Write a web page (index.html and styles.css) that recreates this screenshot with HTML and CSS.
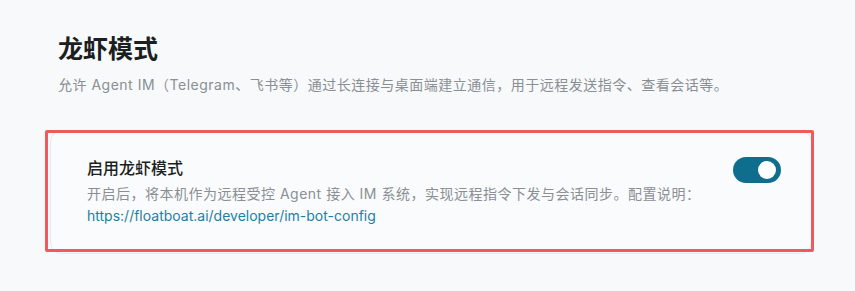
FILE: index.html
```html
<!DOCTYPE html>
<html lang="zh-CN">
<head>
    <meta charset="UTF-8">
    <meta name="viewport" content="width=device-width, initial-scale=1.0">
    <title>龙虾模式</title>
    <link rel="stylesheet" href="styles.css">
</head>
<body>

    <section class="settings">
        <h1 class="settings-title">龙虾模式</h1>
        <p class="settings-desc">允许 Agent IM（Telegram、飞书等）通过长连接与桌面端建立通信，用于远程发送指令、查看会话等。</p>

        <div class="card-wrap">
            <div class="card">
                <div class="card-text">
                    <div class="card-title">启用龙虾模式</div>
                    <div class="card-desc">
                        开启后，将本机作为远程受控 Agent 接入 IM 系统，实现远程指令下发与会话同步。配置说明：<br>
                        <a href="#">https://floatboat.ai/developer/im-bot-config</a>
                    </div>
                </div>
                <label class="switch">
                    <input type="checkbox" checked>
                    <span class="slider"></span>
                </label>
            </div>
            <div class="highlight"></div>
        </div>
    </section>

</body>
</html>
```

FILE: styles.css
```css
/* Global */
body {
    margin: 0;
    padding: 0;
    background-color: #f7f9fa;
    font-family: 'Inter', 'Noto Sans CJK SC', sans-serif;
    color: #1c1f22;
}

.settings {
    padding: 31px 42px 0 58px;
}

.settings-title {
    margin: 0;
    font-size: 25px;
    font-weight: 700;
    line-height: 36px;
}

.settings-desc {
    margin: 7px 0 0;
    font-size: 14px;
    line-height: 22px;
    letter-spacing: 0.5px;
    color: #8a8f94;
}

/* Card */
.card-wrap {
    position: relative;
    margin: 34px 0 0 -8px;
    width: 762px;
}

.card {
    display: flex;
    justify-content: space-between;
    align-items: flex-start;
    padding: 26px 30px 26px 36px;
    background-color: #f9fbfc;
    border: 1px solid #e6eaed;
    border-radius: 12px;
}

.card-title {
    font-size: 16px;
    font-weight: 500;
    line-height: 22px;
    color: #1c1f22;
}

.card-desc {
    margin-top: 4px;
    font-size: 14px;
    line-height: 22px;
    letter-spacing: 0.5px;
    color: #8a8f94;
}

.card-desc a {
    color: #1f7fa3;
    text-decoration: none;
    letter-spacing: 0;
}

/* Toggle */
.switch {
    position: relative;
    display: inline-block;
    width: 48px;
    height: 26px;
    flex-shrink: 0;
}

.switch input {
    display: none;
}

.slider {
    position: absolute;
    inset: 0;
    background-color: #0f6e8e;
    border-radius: 13px;
}

.slider::after {
    content: "";
    position: absolute;
    top: 4px;
    right: 5px;
    width: 18px;
    height: 18px;
    border-radius: 50%;
    background-color: #fff;
}

/* Annotation box */
.highlight {
    position: absolute;
    top: 0;
    left: -5px;
    right: -2px;
    bottom: 2px;
    border: 3px solid #ef5a5c;
    border-radius: 2px;
    pointer-events: none;
}
```
